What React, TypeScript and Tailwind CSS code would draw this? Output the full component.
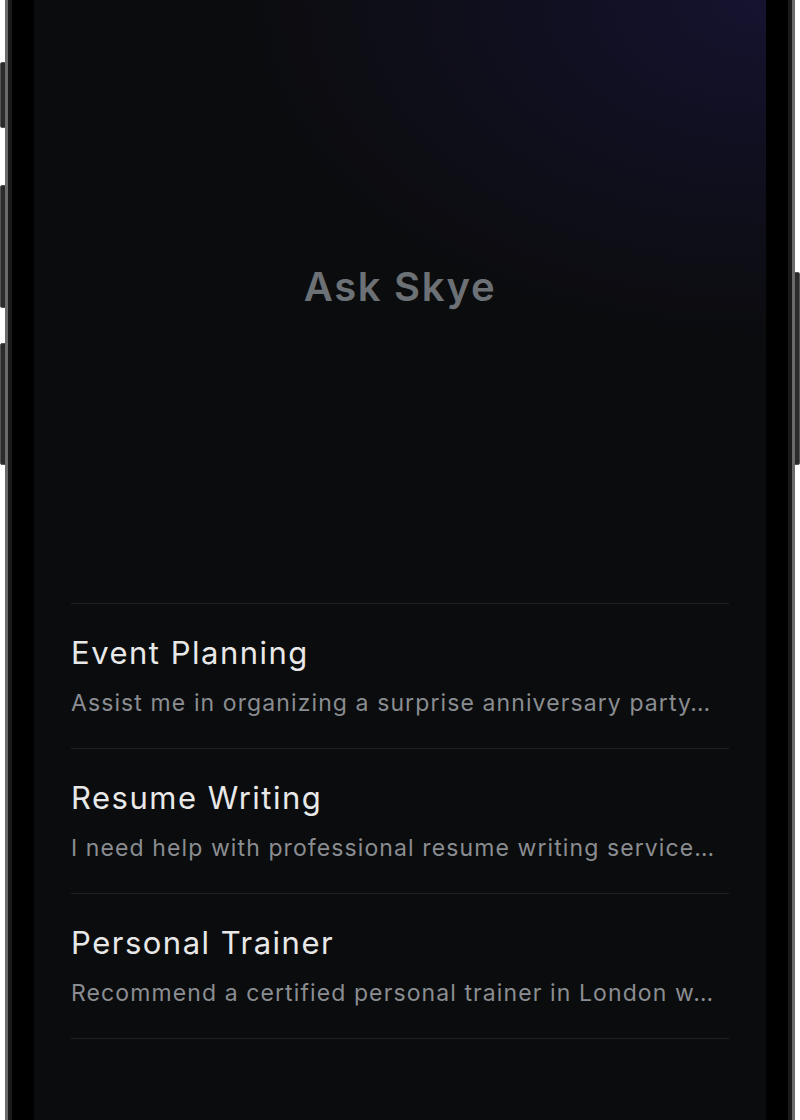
const prompts = [
  { title: 'Event Planning', text: 'Assist me in organizing a surprise anniversary party…' },
  { title: 'Resume Writing', text: 'I need help with professional resume writing service…' },
  { title: 'Personal Trainer', text: 'Recommend a certified personal trainer in London w…' },
];

export default function App() {
  return (
    <div className="relative w-[800px] h-[1120px] overflow-hidden bg-white" style={{ fontFamily: 'Inter, "Noto Sans", sans-serif' }}>
      {/* side buttons */}
      <div className="absolute left-0 top-[62px] w-[7px] h-[66px] rounded-l-[2px] bg-[#2b2b2b] border border-[#555]" />
      <div className="absolute left-0 top-[185px] w-[7px] h-[123px] rounded-l-[2px] bg-[#2b2b2b] border border-[#555]" />
      <div className="absolute left-0 top-[343px] w-[7px] h-[122px] rounded-l-[2px] bg-[#2b2b2b] border border-[#555]" />
      <div className="absolute right-0 top-[272px] w-[7px] h-[193px] rounded-r-[2px] bg-[#2b2b2b] border border-[#555]" />

      {/* phone frame */}
      <div className="relative mx-[5px] h-full bg-[#1a1a1a] border-x-[3px] border-[#6a6a6a] px-[4px]">
        <div className="h-full bg-black px-[22px]">
          {/* screen */}
          <div className="flex h-full flex-col bg-[#0b0c0d] bg-[radial-gradient(ellipse_75%_32%_at_100%_0%,#15132f_0%,#100f1f_45%,#0b0c0d_100%)] px-[37px]">
            <h1 className="pt-[263px] text-center text-[40px] leading-[48px] font-semibold text-[#6c7176] tracking-[1.7px]">
              Ask Skye
            </h1>

            <ul className="mt-[292px] flex flex-col border-b border-[#1f2124]">
              {prompts.map((p) => (
                <li key={p.title} className="flex flex-col gap-[18px] border-t border-[#1f2124] py-[31px]">
                  <div className="text-[31px] leading-[36px] text-[#e8e8e8] tracking-[1.5px]">{p.title}</div>
                  <div className="text-[23px] leading-[28px] text-[#8a8d91] tracking-[1.1px] whitespace-nowrap overflow-hidden">
                    {p.text}
                  </div>
                </li>
              ))}
            </ul>
          </div>
        </div>
      </div>
    </div>
  );
}
